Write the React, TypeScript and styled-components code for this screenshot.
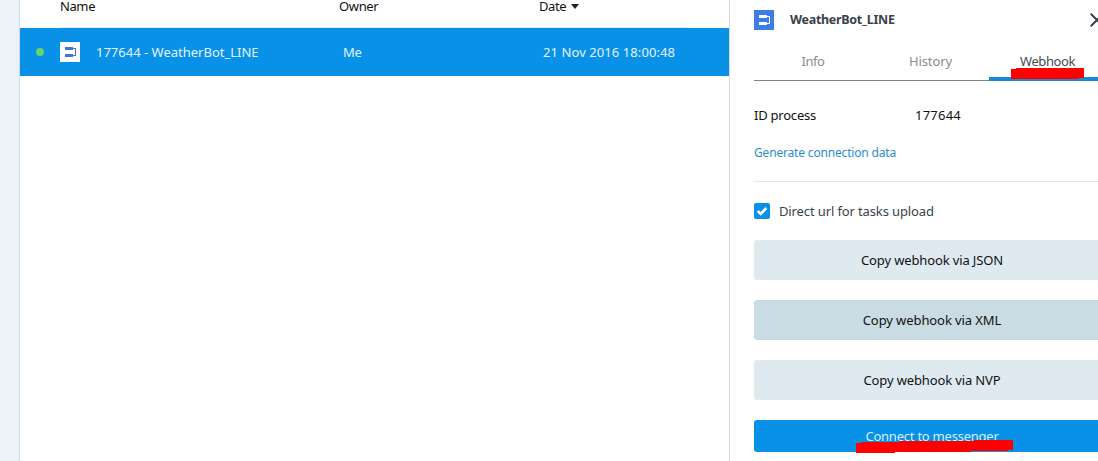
import React from "react";
import styled, { createGlobalStyle } from "styled-components";

const Global = createGlobalStyle`
  * { box-sizing: border-box; }
  body { margin: 0; overflow: hidden; background: #fff; }
`;

const Page = styled.div`
  display: flex;
  width: 1098px;
  height: 461px;
  overflow: hidden;
  font: 13px/20px "Noto Sans", sans-serif;
  color: #111;
`;

const Rail = styled.aside`
  flex: none;
  width: 20px;
  background: #ebf3f6;
  border-right: 1px solid #cbdbe3;
`;

const List = styled.main`
  flex: none;
  width: 710px;
  border-right: 1px solid #cfd8dd;
`;

const Label = styled.span<{ $track?: number }>`
  white-space: nowrap;
  letter-spacing: ${(p) => p.$track ?? 0}px;
`;

const ListHead = styled.div`
  display: grid;
  grid-template-columns: 279px 200px 1fr;
  height: 28px;
  margin: 0 41px 0 40px;
  border-bottom: 1px solid #dfeaf0;
`;

const HeadCell = styled.div`
  display: flex;
  align-items: center;
  gap: 5px;
  height: 12px;
  line-height: 12px;
`;

const SortArrow = styled.i`
  border: 4px solid transparent;
  border-top: 5px solid #222;
  border-bottom: 0;
`;

const ListRow = styled.div`
  display: grid;
  grid-template-columns: 24px 36px 247px 200px 1fr;
  align-items: center;
  height: 48px;
  padding-left: 16px;
  background: #0891e6;
  color: #e4f4fd;
`;

const Status = styled.i`
  width: 8px;
  height: 8px;
  border-radius: 50%;
  background: #66d46c;
`;

const Panel = styled.section`
  flex: none;
  width: 380px;
  padding-left: 24px;
`;

const PanelHead = styled.header`
  display: flex;
  align-items: center;
  height: 40px;
`;

const Title = styled.h1`
  flex: 1;
  margin: 0 0 0 16px;
  font-size: 12.5px;
  line-height: 20px;
  font-weight: 700;
  letter-spacing: -0.3px;
  color: #38424a;
`;

const Close = styled.svg`
  margin-right: 6px;
`;

const Tabs = styled.nav`
  display: grid;
  grid-template-columns: 118px 117px 117px;
  height: 41px;
  border-bottom: 1px solid #7d858b;
`;

const Tab = styled.div<{ $active?: boolean }>`
  position: relative;
  height: 41px;
  padding-top: 11px;
  text-align: center;
  color: ${(p) => (p.$active ? "#424b52" : "#868d92")};
  border-bottom: ${(p) => (p.$active ? "4px solid #1a8ad2" : "0")};
`;

const Field = styled.div`
  display: grid;
  grid-template-columns: 161px 1fr;
  padding-top: 24px;
`;

const LinkLine = styled.div`
  height: 57px;
  padding-top: 18px;
  font-size: 12px;
  line-height: 19px;
  color: #2a8ecb;
  border-bottom: 1px solid #dfe6e9;
`;

const CheckLine = styled.div`
  display: flex;
  align-items: center;
  gap: 9px;
  height: 58px;
  color: #38424a;
`;

const Checkbox = styled.span`
  display: flex;
  width: 16px;
  height: 16px;
  border-radius: 2px;
  background: #0891e6;
`;

const Actions = styled.div`
  display: flex;
  flex-direction: column;
  gap: 20px;
`;

const Button = styled.div<{ $tone?: "hover" | "primary" }>`
  position: relative;
  display: flex;
  align-items: center;
  justify-content: center;
  height: ${(p) => (p.$tone === "primary" ? 32 : 40)}px;
  border-radius: 3px;
  background: ${(p) => (p.$tone === "primary" ? "#0891e6" : p.$tone === "hover" ? "#cadce3" : "#dfeaf0")};
  color: ${(p) => (p.$tone === "primary" ? "#d6f0fb" : "#111")};
`;

const Marker = styled.svg<{ $x: number; $y: number }>`
  position: absolute;
  left: ${(p) => p.$x}px;
  top: ${(p) => p.$y}px;
`;

const ProcessIcon = ({ bg, fg }: { bg: string; fg: string }) => (
  <svg width="20" height="20" viewBox="0 0 20 20" shapeRendering="crispEdges">
    <path fill={bg} d="M0 0h20v20H0z" />
    <path fill={fg} d="M5 5h8v3H5zM5 12h8v3H5zM13 6h3v8h-3v-1h2V7h-2z" />
  </svg>
);

export default function App() {
  return (
    <Page>
      <Global />
      <Rail />
      <List>
        <ListHead>
          <HeadCell><Label $track={-0.4}>Name</Label></HeadCell>
          <HeadCell><Label $track={-0.35}>Owner</Label></HeadCell>
          <HeadCell><Label $track={-0.4}>Date</Label><SortArrow /></HeadCell>
        </ListHead>
        <ListRow>
          <Status />
          <ProcessIcon bg="#fff" fg="#3f75d3" />
          <Label>177644 - WeatherBot_LINE</Label>
          <Label $track={-0.4}>Me</Label>
          <Label $track={0.08}>21 Nov 2016 18:00:48</Label>
        </ListRow>
      </List>
      <Panel>
        <PanelHead>
          <ProcessIcon bg="#3d7ce4" fg="#fff" />
          <Title>WeatherBot_LINE</Title>
          <Close width="14" height="14" viewBox="0 0 14 14" fill="none" stroke="#3a4248" strokeWidth="2">
            <path d="M.7.7l12.6 12.6M13.3.7L.7 13.3" />
          </Close>
        </PanelHead>
        <Tabs>
          <Tab><Label $track={-0.4}>Info</Label></Tab>
          <Tab><Label $track={-0.1}>History</Label></Tab>
          <Tab $active>
            <Label $track={-0.4}>Webhook</Label>
            <Marker $x={22} $y={28} width="73" height="11" viewBox="0 0 73 11">
              <path fill="#f00" d="M0 1h5V0h68v10h-5v1H0z" />
            </Marker>
          </Tab>
        </Tabs>
        <Field>
          <Label $track={-0.23}>ID process</Label>
          <Label $track={0.23}>177644</Label>
        </Field>
        <LinkLine><Label $track={-0.17}>Generate connection data</Label></LinkLine>
        <CheckLine>
          <Checkbox>
            <svg width="16" height="16" viewBox="0 0 16 16" fill="none" stroke="#fff" strokeWidth="2.6">
              <path d="M3.7 8l3 3 5.6-6" />
            </svg>
          </Checkbox>
          <Label $track={-0.12}>Direct url for tasks upload</Label>
        </CheckLine>
        <Actions>
          <Button><Label $track={-0.13}>Copy webhook via JSON</Label></Button>
          <Button $tone="hover"><Label $track={-0.09}>Copy webhook via XML</Label></Button>
          <Button><Label $track={-0.13}>Copy webhook via NVP</Label></Button>
          <Button $tone="primary">
            <Label $track={-0.23}>Connect to messenger</Label>
            <Marker $x={102} $y={20} width="157" height="13" viewBox="0 0 157 13">
              <path fill="#f00" d="M0 3h5V2h38V1h75V0h39v10h-5v1h-38v1H39v1H0z" />
            </Marker>
          </Button>
        </Actions>
      </Panel>
    </Page>
  );
}
